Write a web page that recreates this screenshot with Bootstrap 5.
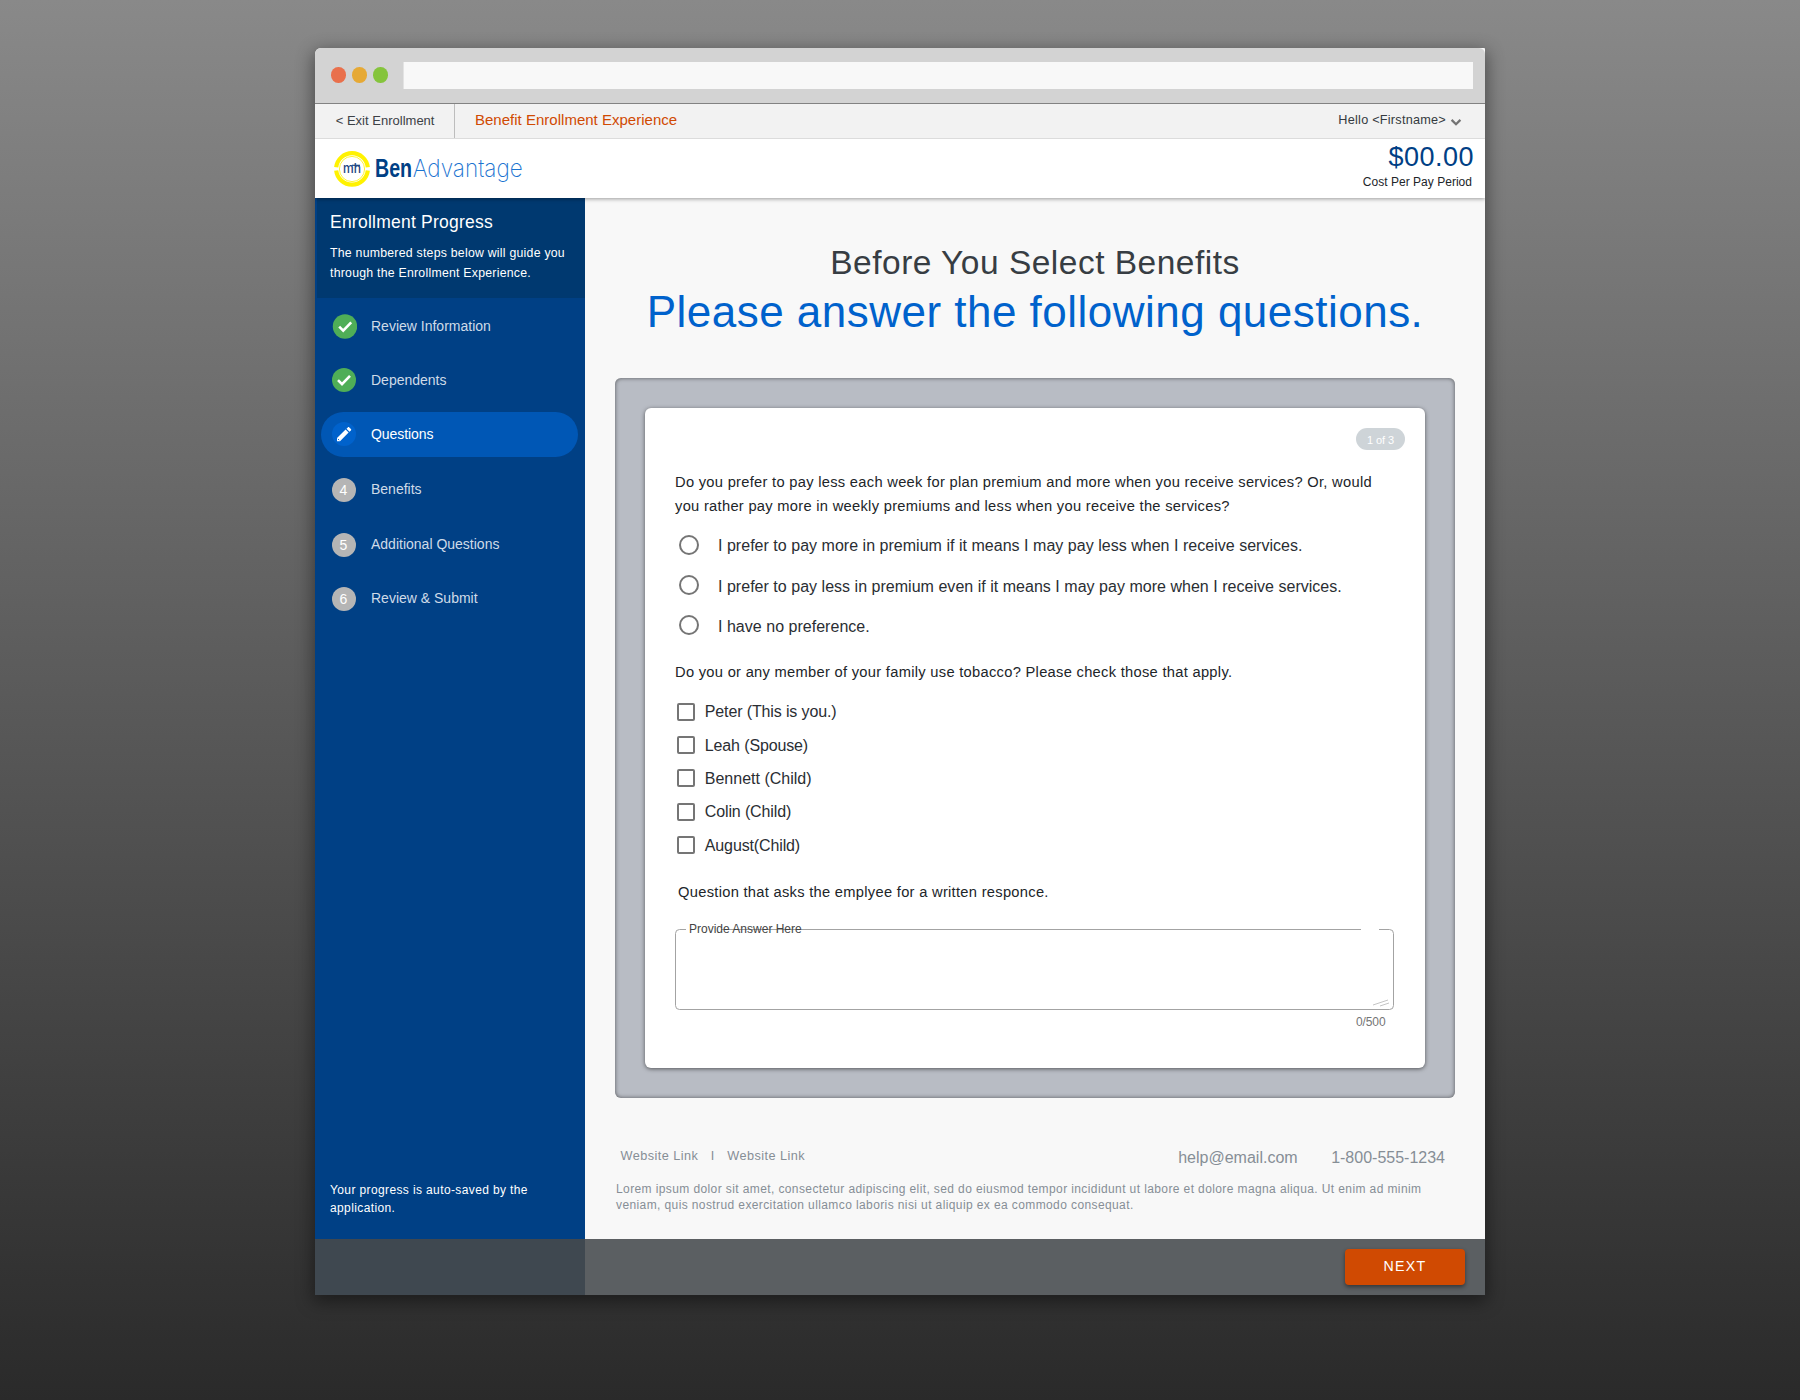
<!DOCTYPE html>
<html lang="en">
<head>
<meta charset="utf-8">
<meta name="viewport" content="width=device-width, initial-scale=1">
<title>BenAdvantage – Benefit Enrollment Experience</title>
<link rel="stylesheet" href="https://cdn.jsdelivr.net/npm/bootstrap@5.3.0/dist/css/bootstrap.min.css">
<style>
  html, body { height: 1400px; }
  body { font-family: "Liberation Sans", Arial, sans-serif; background: linear-gradient(#898989, #2a2a2a); color: #212529; overflow: hidden; padding-top: 48px; line-height: 1; white-space: nowrap; }
  .win { width: 1170px; height: 1247px; background: #f8f8f8; border-radius: 6px 1px 2px 0; box-shadow: 0 5px 17px 2px rgba(0,0,0,.42); }
  .chrome { height: 56px; background: #d3d3d3; border-bottom: 1px solid #828282; border-radius: 6px 6px 0 0; padding: 0 12px 1px 16px; }
  .dot { width: 14.5px; height: 15.5px; margin-right: 6.5px; }
  .dot-red { background: #e9704c; }
  .dot-amber { background: #e6a935; }
  .dot-green { background: #85c43c; }
  .url { height: 27px; background: #f8f8f8; margin-left: 9.5px; box-shadow: -1px 0 #e3e3e3; }
  .topbar { height: 35px; background: #f2f2f2; border-bottom: 1px solid #dcdcdc; color: #3c4146; }
  .exit { width: 140px; padding: 0 0 1px 20.7px; border-right: 1px solid #bdbdbd; font-size: 13px; letter-spacing: .01px; color: inherit; }
  .flow-name { font-size: 15px; letter-spacing: .013px; color: #d04a02; padding: 0 0 3px 20px; }
  .hello { font-size: 12.7px; letter-spacing: .235px; padding: 0 23px 2px 0; color: #343a40; }
  .hello svg { margin: 3px 0 0 4px; }
  .brandbar { height: 59px; background: #fff; z-index: 2; box-shadow: 0 1px 4px rgba(0,0,0,.38); clip-path: inset(0 0 -8px 0); }
  .cost { padding-right: 11px; }
  .price { font-size: 27px; line-height: 34px; letter-spacing: .487px; color: #004085; padding-top: 1px; }
  .per { font-size: 12px; line-height: 16px; letter-spacing: .025px; padding-right: 2px; }
  .side { width: 270px; background: #004085; color: #fff; }
  .intro { height: 100px; margin-left: 2px; background: #003970; padding: 12px 0 0 13px; }
  .intro h2 { font-size: 17.5px; line-height: 24px; letter-spacing: .234px; margin: 0 0 9px; font-weight: 400; }
  .intro p { font-size: 12.3px; line-height: 20px; letter-spacing: .24px; margin: 0; }
  .steps { padding-top: 5.5px; }
  .step { height: 45px; margin: 0 7px 9px 6px; padding-left: 11px; font-size: 14px; color: #cfdbe8; border-radius: 23px; }
  .step.now { background: #0057b5; color: #fff; margin-bottom: 10.5px; letter-spacing: -.08px; }
  .step.next { margin-bottom: 10px; }
  .step span { padding-bottom: 1px; }
  .step svg { margin-right: 15px; flex: none; }
  .step svg.first { margin-right: 14px; }
  .num { width: 24px; height: 24px; background: #b5b5b5; color: #fff; margin-right: 15px; padding: 1px 1px 0 0; font-size: 14px; }
  .saved { font-size: 12px; line-height: 18px; letter-spacing: .38px; padding: 0 0 22px 15px; margin: 0; }
  .titles { height: 180px; padding-top: 45px; }
  .titles h1 { font-size: 33.5px; line-height: 40px; letter-spacing: .49px; color: #373d43; margin: 0 0 4px; font-weight: 400; }
  .titles h2 { font-size: 44px; line-height: 50px; letter-spacing: .486px; color: #0062cc; margin: 0; font-weight: 400; }
  .panel { height: 720px; margin: 0 30px; padding: 30px; background: #b8bcc4; border-radius: 6px; box-shadow: inset 0 0 4px rgba(0,0,0,.55); }
  .sheet { height: 660px; background: #fff; border-radius: 6px; box-shadow: 0 1px 4px rgba(0,0,0,.55); padding: 20px 0 0 30px; }
  .pager { width: 49px; height: 22px; background: #ced4d8; border-radius: 11px; font-size: 11px; letter-spacing: -.08px; color: #fff; margin-right: 20px; padding-top: 2px; }
  .ask { font-size: 14.7px; line-height: 24px; letter-spacing: .289px; margin: 20px 0 7px; }
  .ask-family { margin: 14px 0 10.8px; }
  .ask-written { margin: 18px 0 0 3px; }
  .opt { height: 40.4px; font-size: 16px; letter-spacing: .025px; padding-left: 4px; color: #2a2e33; }
  .opt input { width: 20px; height: 20px; margin: 0 19px 1px 0; border: 2px solid #757575; float: none; }
  .opt label { padding-top: 2px; }
  .chk { height: 33.4px; font-size: 16px; padding-left: 2px; color: #2a2e33; }
  .chk label { padding-top: 1px; }
  .chk input { width: 18px; height: 18px; margin: 0 9.8px 0 0; border: 2px solid #757575; border-radius: 2px !important; }
  .tight { letter-spacing: -.13px; }
  .answer { width: 719.5px; height: 81px; margin-top: 25px; }
  .answer textarea { resize: none; background: none; border: 0; }
  .answer label { left: 14px; top: -7px; font-size: 12px; line-height: 14px; letter-spacing: 0; color: #444; }
  .count { font-size: 12px; line-height: 16px; letter-spacing: -.1px; color: #757575; padding-right: 39.5px; margin-top: 4.5px; }
  .foot { color: #868e96; padding: 49px 40px 0 31px; }
  .foot a { color: inherit; text-decoration: none; }
  .links { font-size: 12.7px; letter-spacing: .449px; line-height: 19px; padding-left: 4.5px; }
  .links span { padding: 0 12.6px 0 12.4px; }
  .contact { font-size: 16px; line-height: 22px; gap: 33.5px; }
  .legal { font-size: 12px; line-height: 16px; letter-spacing: .393px; margin: 12px 0 0; }
  .actions { height: 56px; background: #5b5f62; }
  .actions-side { width: 270px; background: #3f4850; }
  .next-btn { width: 120px; height: 36px; margin-right: 20px; background: #d04a02 !important; border: 0; border-radius: 4px; color: #fff !important; font-size: 14.2px; letter-spacing: 1.3px; padding: 0 0 1px; box-shadow: 0 2px 4px rgba(0,0,0,.45); }
</style>
</head>
<body>
<div class="win mx-auto d-flex flex-column">
  <div class="chrome d-flex align-items-center">
    <span class="dot dot-red rounded-circle"></span>
    <span class="dot dot-amber rounded-circle"></span>
    <span class="dot dot-green rounded-circle"></span>
    <div class="url flex-grow-1"></div>
  </div>

  <nav class="topbar d-flex align-items-stretch">
    <a href="#" class="exit d-flex align-items-center text-decoration-none">&lt; Exit Enrollment</a>
    <div class="flow-name d-flex align-items-center">Benefit Enrollment Experience</div>
    <div class="hello d-flex align-items-center ms-auto">Hello &lt;Firstname&gt;
      <svg width="12" height="10" viewBox="0 0 12 10"><path d="M1.6 2.9 6 7.2l4.4-4.3" fill="none" stroke="#747474" stroke-width="2.3"/></svg>
    </div>
  </nav>

  <header class="brandbar position-relative d-flex justify-content-between">
    <svg width="230" height="59" viewBox="0 0 230 59" role="img" aria-label="BenAdvantage">
      <g fill="none" stroke="#fff200">
        <path d="M21.2 28.3A15.9 15.9 0 0 1 52.8 28.3M21.2 31.6A15.9 15.9 0 0 0 52.8 31.6" stroke-width="4.2"/>
        <circle cx="37" cy="30" r="12.6" stroke-width=".8"/>
      </g>
      <text x="28" y="33.6" textLength="18" lengthAdjust="spacingAndGlyphs" font-family="Inter, sans-serif" font-weight="500" font-size="13.6" fill="#1c4480">mh</text>
      <path d="M37 26.3h8" stroke="#1c4480" stroke-width="1.2"/>
      <text x="60" y="37.6" textLength="37" lengthAdjust="spacingAndGlyphs" font-family="Liberation Sans, sans-serif" font-weight="700" font-size="25.5" fill="#004085">Ben</text>
      <text x="97.8" y="37.6" textLength="110" lengthAdjust="spacingAndGlyphs" font-family="Inter, sans-serif" font-weight="200" font-size="24" fill="#1a73d0">Advantage</text>
    </svg>
    <div class="cost d-flex flex-column align-items-end">
      <div class="price">$00.00</div>
      <div class="per">Cost Per Pay Period</div>
    </div>
  </header>

  <div class="d-flex flex-grow-1">
    <aside class="side d-flex flex-column">
      <div class="intro">
        <h2>Enrollment Progress</h2>
        <p>The numbered steps below will guide you<br>through the Enrollment Experience.</p>
      </div>
      <div class="steps">
        <div class="step d-flex align-items-center"><svg class="first" width="25" height="25" viewBox="0 0 25 25"><circle cx="13" cy="12.5" r="12.2" fill="#4fae57"/><path d="m7.2 12.6 4 4 8-8.3" fill="none" stroke="#fff" stroke-width="2.6"/></svg><span>Review Information</span></div>
        <div class="step d-flex align-items-center"><svg width="24" height="24" viewBox="0 0 24 24"><circle cx="12" cy="12" r="12" fill="#4fae57"/><path d="m6 12.1 4 4 8-8.3" fill="none" stroke="#fff" stroke-width="2.6"/></svg><span>Dependents</span></div>
        <div class="step now d-flex align-items-center"><svg width="24" height="24" viewBox="0 0 24 24"><circle cx="12" cy="12" r="12" fill="#0062cc"/><path d="M5 19.2v-3.1l8.6-8.5 3 3-8.6 8.6zM14.5 6.7l1.3-1.3c.5-.5 1-.5 1.5 0l1.6 1.6c.5.5.5 1 0 1.5l-1.4 1.3z" fill="#fff"/><path d="m5.9 16.9 1.3 1.3" stroke="#0062cc" stroke-width=".9"/></svg><span>Questions</span></div>
        <div class="step next d-flex align-items-center"><b class="num rounded-circle fw-normal d-flex align-items-center justify-content-center">4</b><span>Benefits</span></div>
        <div class="step d-flex align-items-center"><b class="num rounded-circle fw-normal d-flex align-items-center justify-content-center">5</b><span>Additional Questions</span></div>
        <div class="step d-flex align-items-center"><b class="num rounded-circle fw-normal d-flex align-items-center justify-content-center">6</b><span>Review &amp; Submit</span></div>
      </div>
      <p class="saved mt-auto">Your progress is auto-saved by the<br>application.</p>
    </aside>

    <main class="flex-grow-1">
      <div class="titles text-center">
        <h1>Before You Select Benefits</h1>
        <h2>Please answer the following questions.</h2>
      </div>

      <div class="panel">
        <form class="sheet">
          <div class="pager d-flex align-items-center justify-content-center ms-auto">1 of 3</div>
          <p class="ask">Do you prefer to pay less each week for plan premium and more when you receive services? Or, would<br>you rather pay more in weekly premiums and less when you receive the services?</p>
          <div class="opt d-flex align-items-center"><input class="form-check-input" type="radio" name="pref" id="p1"><label for="p1">I prefer to pay more in premium if it means I may pay less when I receive services.</label></div>
          <div class="opt d-flex align-items-center"><input class="form-check-input" type="radio" name="pref" id="p2"><label for="p2">I prefer to pay less in premium even if it means I may pay more when I receive services.</label></div>
          <div class="opt d-flex align-items-center"><input class="form-check-input" type="radio" name="pref" id="p3"><label for="p3">I have no preference.</label></div>
          <p class="ask ask-family">Do you or any member of your family use tobacco? Please check those that apply.</p>
          <div class="chk d-flex align-items-center"><input class="form-check-input" type="checkbox" id="c1"><label class="tight" for="c1">Peter (This is you.)</label></div>
          <div class="chk d-flex align-items-center"><input class="form-check-input" type="checkbox" id="c2"><label class="tight" for="c2">Leah (Spouse)</label></div>
          <div class="chk d-flex align-items-center"><input class="form-check-input" type="checkbox" id="c3"><label for="c3">Bennett (Child)</label></div>
          <div class="chk d-flex align-items-center"><input class="form-check-input" type="checkbox" id="c4"><label class="tight" for="c4">Colin (Child)</label></div>
          <div class="chk d-flex align-items-center"><input class="form-check-input" type="checkbox" id="c5"><label class="tight" for="c5">August(Child)</label></div>
          <p class="ask ask-written">Question that asks the emplyee for a written responce.</p>
          <div class="answer position-relative">
            <svg class="position-absolute top-0 start-0" width="720" height="82" viewBox="0 0 720 82" fill="none" stroke="#a3a3a3">
              <path d="M11 .5H4.5A4 4 0 0 0 .5 4.5V76.5a4 4 0 0 0 4 4H714.5a4 4 0 0 0 4-4V4.5a4 4 0 0 0-4-4H704M46 .5H686"/>
              <path d="m698 76 15-5M705 77l9-3" stroke="#b5b5b5" stroke-width=".8"/>
            </svg>
            <textarea id="ans" class="w-100 h-100 p-3"></textarea>
            <label for="ans" class="position-absolute">Provide Answer Here</label>
          </div>
          <div class="count text-end">0/500</div>
        </form>
      </div>

      <footer class="foot">
        <div class="d-flex justify-content-between">
          <div class="links d-flex"><a href="#">Website Link</a><span>I</span><a href="#">Website Link</a></div>
          <div class="contact d-flex"><a href="#">help@email.com</a><span>1-800-555-1234</span></div>
        </div>
        <p class="legal">Lorem ipsum dolor sit amet, consectetur adipiscing elit, sed do eiusmod tempor incididunt ut labore et dolore magna aliqua. Ut enim ad minim<br>veniam, quis nostrud exercitation ullamco laboris nisi ut aliquip ex ea commodo consequat.</p>
      </footer>
    </main>
  </div>

  <div class="actions d-flex justify-content-between align-items-center">
    <div class="actions-side h-100"></div>
    <button class="btn next-btn" type="button">NEXT</button>
  </div>
</div>
<script src="https://cdn.jsdelivr.net/npm/bootstrap@5.3.0/dist/js/bootstrap.bundle.min.js"></script>
</body>
</html>
